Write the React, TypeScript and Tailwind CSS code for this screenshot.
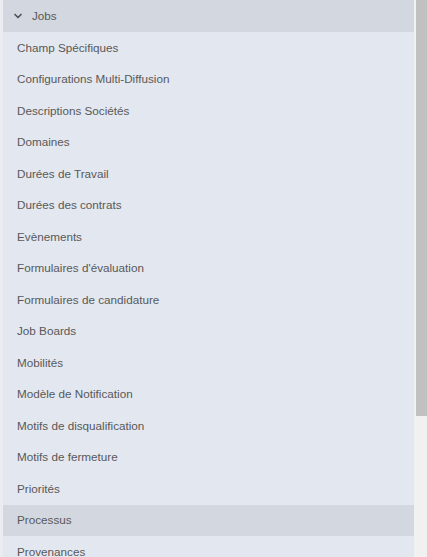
import { ChevronDown } from "lucide-react"

const items = [
  "Champ Spécifiques",
  "Configurations Multi-Diffusion",
  "Descriptions Sociétés",
  "Domaines",
  "Durées de Travail",
  "Durées des contrats",
  "Evènements",
  "Formulaires d'évaluation",
  "Formulaires de candidature",
  "Job Boards",
  "Mobilités",
  "Modèle de Notification",
  "Motifs de disqualification",
  "Motifs de fermeture",
  "Priorités",
  "Processus",
  "Provenances",
]

export default function App() {
  return (
    <div className="flex h-[557px] w-[427px] overflow-hidden bg-[#f1f1f1] font-['Liberation_Sans',Arial,sans-serif] text-[11.7px] text-[#595959]">
      {/* left edge strip */}
      <div className="w-[3px] shrink-0 bg-[#eaecf1]" />

      <div className="w-[411px] shrink-0">
        {/* Section header */}
        <div className="flex h-[32px] items-center bg-[#d3d7df] pl-[9px]">
          <ChevronDown size={12} strokeWidth={3.5} className="text-[#555]" />
          <span className="ml-[8px]">Jobs</span>
        </div>

        {items.map((item) => (
          <div
            key={item}
            className={
              "flex h-[31.5px] items-center pl-[14px] " +
              (item === "Processus" ? "bg-[#d3d7df]" : "bg-[#e3e7ef]")
            }
          >
            {item}
          </div>
        ))}
      </div>

      {/* scrollbar */}
      <div className="ml-[2px] w-[11px] shrink-0 bg-[#f1f1f1]">
        <div className="h-[416px] bg-[#c1c1c1]" />
      </div>
    </div>
  )
}
